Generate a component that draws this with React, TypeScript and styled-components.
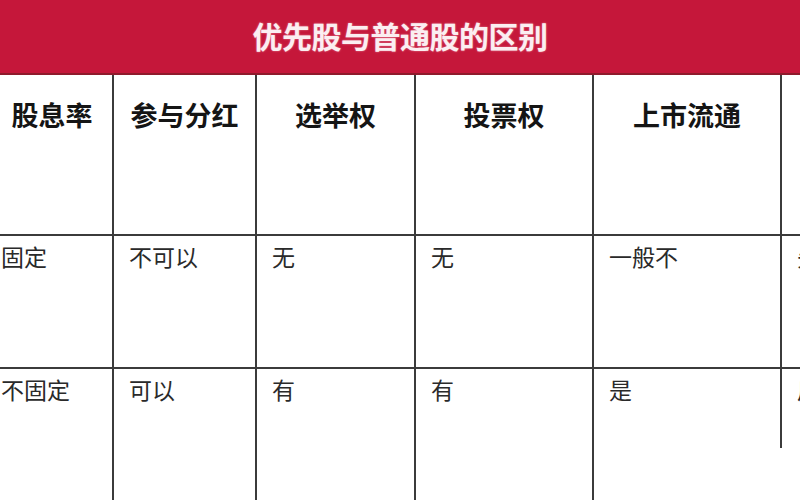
import React from "react";
import styled, { createGlobalStyle } from "styled-components";

const Global = createGlobalStyle`
  html, body { margin: 0; padding: 0; background: #ffffff; }
  body { width: 800px; height: 500px; overflow: hidden; font-family: "Noto Sans CJK SC", "Noto Sans", sans-serif; }
`;

const Page = styled.div`
  width: 800px;
  height: 500px;
  display: flex;
  flex-direction: column;
  overflow: hidden;
  background: #ffffff;
`;

const TitleBar = styled.div`
  height: 75px;
  flex: none;
  background: #c5173a;
  border-bottom: 2px solid #8e1a2c;
  display: flex;
  align-items: center;
  justify-content: center;
  padding-bottom: 4px;
  box-sizing: border-box;
`;

const Title = styled.h1`
  margin: 0;
  font-size: 30px;
  font-weight: 700;
  color: #fbeef1;
  letter-spacing: -0.5px;
  text-shadow: 0 0 2px rgba(255, 220, 230, 0.6);
`;

const Grid = styled.div`
  flex: 1;
  display: grid;
  grid-template-columns: 112px 143px 159px 178px 188px 1fr;
  grid-template-rows: 159px 133px 1fr;
  min-height: 0;
`;

const Cell = styled.div<{ $first?: boolean; $head?: boolean; $topRule?: boolean; $short?: boolean }>`
  box-sizing: border-box;
  border-left: ${(p) => (p.$first ? "none" : "2px solid #3b3b3b")};
  border-top: ${(p) => (p.$topRule ? "2px solid #3b3b3b" : "none")};
  color: ${(p) => (p.$head ? "#151515" : "#2a2a2a")};
  font-size: ${(p) => (p.$head ? "27px" : "23px")};
  font-weight: ${(p) => (p.$head ? 700 : 400)};
  line-height: ${(p) => (p.$head ? "36px" : "30px")};
  text-align: ${(p) => (p.$head ? "center" : "left")};
  padding: ${(p) =>
    p.$head
      ? p.$first
        ? "22px 8px 0 0"
        : "22px 0 0 0"
      : p.$first
      ? "5px 0 0 1px"
      : "5px 0 0 15px"};
  white-space: nowrap;
  overflow: hidden;
  align-self: ${(p) => (p.$short ? "start" : "stretch")};
  height: ${(p) => (p.$short ? "81px" : "auto")};
`;

const headers = ["股息率", "参与分红", "选举权", "投票权", "上市流通", ""];
const rows = [
  ["固定", "不可以", "无", "无", "一般不", "先"],
  ["不固定", "可以", "有", "有", "是", "后"],
];

export default function App() {
  return (
    <>
      <Global />
      <Page>
        <TitleBar>
          <Title>优先股与普通股的区别</Title>
        </TitleBar>
        <Grid>
          {headers.map((h, i) => (
            <Cell key={"h" + i} $head $first={i === 0}>
              {h}
            </Cell>
          ))}
          {rows.map((r, ri) =>
            r.map((c, ci) => (
              <Cell
                key={ri + "-" + ci}
                $first={ci === 0}
                $topRule
                $short={ri === 1 && ci === 5}
              >
                {c}
              </Cell>
            ))
          )}
        </Grid>
      </Page>
    </>
  );
}
